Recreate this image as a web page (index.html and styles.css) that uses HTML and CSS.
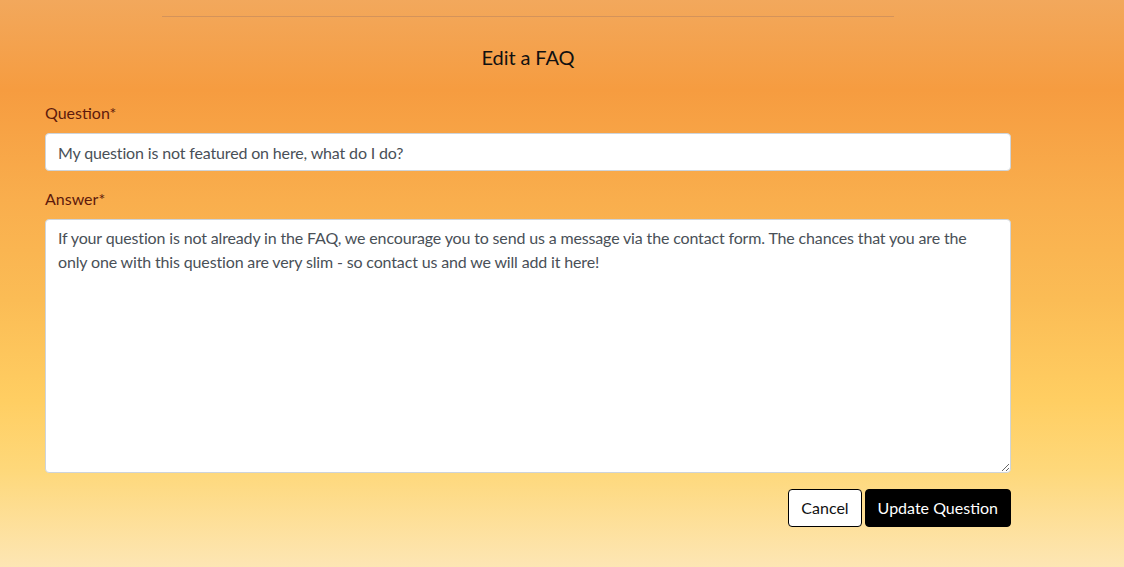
FILE: index.html
```html
<!DOCTYPE html>
<html lang="en">
<head>
<meta charset="utf-8">
<title>Edit a FAQ</title>
<link rel="stylesheet" href="styles.css">
</head>
<body>
<main class="page">
  <hr class="divider">
  <h2 class="title">Edit a FAQ</h2>
  <form class="faq-form">
    <div class="form-group">
      <label class="label" for="q">Question*</label>
      <input class="control" id="q" type="text" value="My question is not featured on here, what do I do?">
    </div>
    <div class="form-group">
      <label class="label" for="a">Answer*</label>
      <textarea class="control area" id="a">If your question is not already in the FAQ, we encourage you to send us a message via the contact form. The chances that you are the only one with this question are very slim - so contact us and we will add it here!</textarea>
    </div>
    <div class="actions">
      <button type="button" class="btn btn-cancel">Cancel</button>
      <button type="button" class="btn btn-primary">Update Question</button>
    </div>
  </form>
</main>
</body>
</html>
```
FILE: styles.css
```css
html, body {
  margin: 0;
  padding: 0;
}
body {
  min-height: 567px;
  font-family: Lato, "Open Sans", sans-serif;
  background: linear-gradient(to bottom,
    #f2a85c 0px,
    #f69c40 90px,
    #f9ae4d 200px,
    #fbbc55 300px,
    #ffce62 400px,
    #fed87a 470px,
    #fde6b4 567px);
}
.page {
  width: 966px;
  margin-left: 45px;
  padding-top: 16px;
}
.divider {
  margin: 0 117px;
  border: 0;
  border-top: 1px solid #d4935a;
  height: 0;
}
.title {
  margin: 28px 0 0;
  text-align: center;
  font-size: 20px;
  font-weight: 400;
  line-height: 24px;
  letter-spacing: -0.1px;
  color: #111;
}
.faq-form {
  margin-top: 32px;
}
.form-group {
  margin-bottom: 16px;
}
.label {
  display: block;
  font-size: 16px;
  line-height: 24px;
  margin-bottom: 8px;
  color: #5e1a0c;
}
.control {
  display: block;
  box-sizing: border-box;
  width: 100%;
  height: 38px;
  padding: 6px 12px;
  font-family: Lato, "Open Sans", sans-serif;
  font-size: 16px;
  line-height: 24px;
  letter-spacing: -0.15px;
  color: #495057;
  background: #fff;
  border: 1px solid #ced4da;
  border-radius: 4px;
  outline: none;
  margin: 0;
}
.area {
  height: 254px;
  resize: vertical;
}
.actions {
  display: flex;
  justify-content: flex-end;
  gap: 3px;
}
.btn {
  box-sizing: border-box;
  height: 38px;
  padding: 6px 12px;
  font-family: Lato, "Open Sans", sans-serif;
  font-size: 16px;
  line-height: 24px;
  border-radius: 4px;
  border: 1px solid #000;
  cursor: pointer;
}
.btn-cancel {
  background: #fff;
  color: #111;
}
.btn-primary {
  background: #000;
  color: #fff;
}
```
